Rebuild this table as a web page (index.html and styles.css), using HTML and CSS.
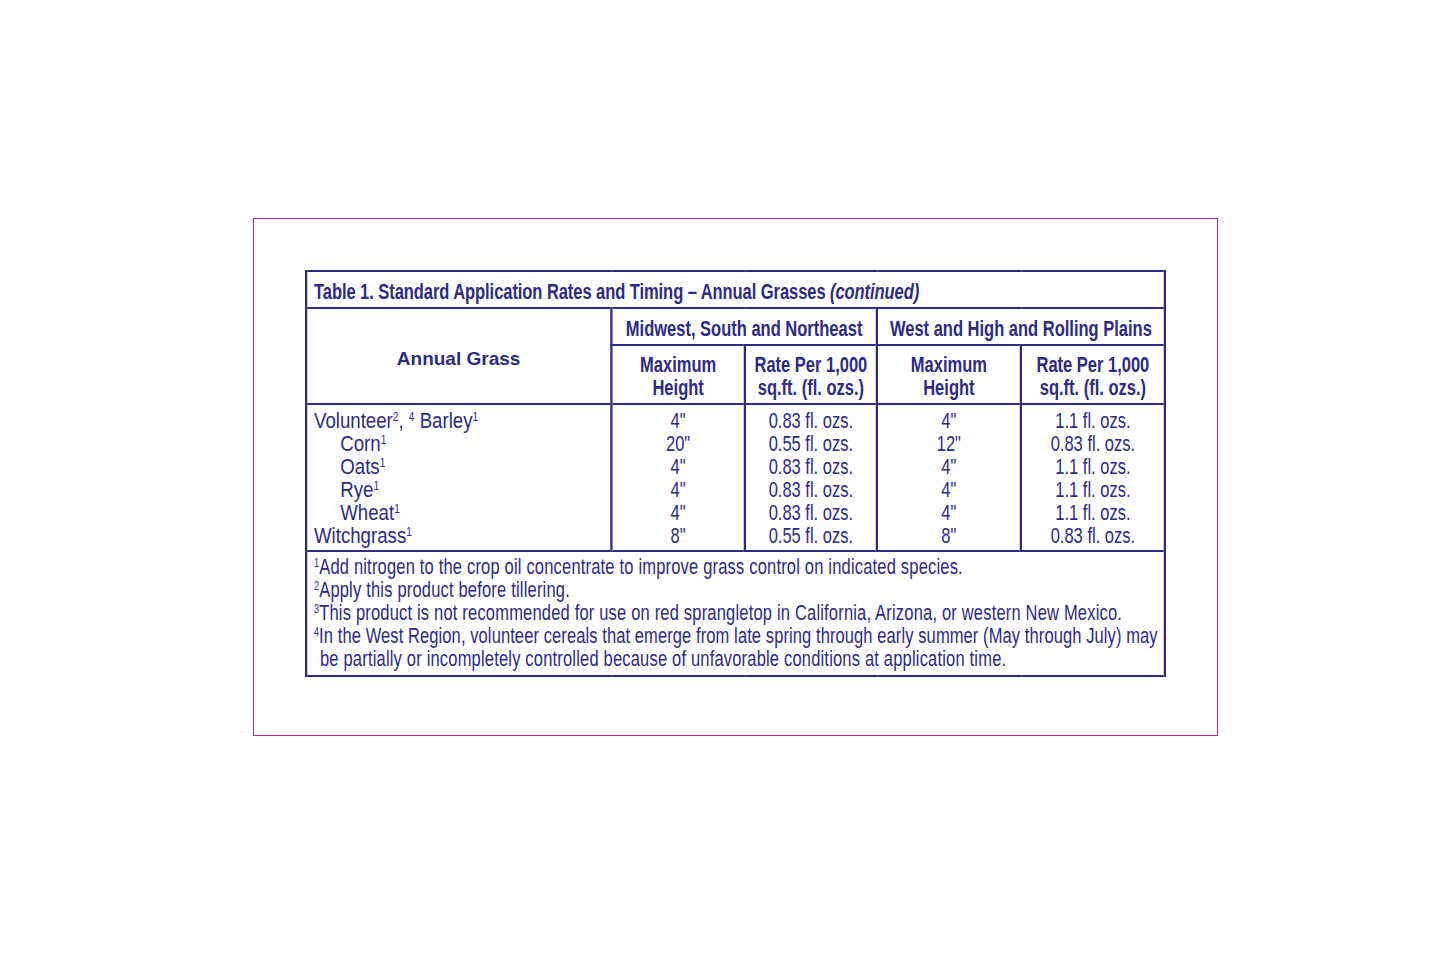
FILE: index.html
```html
<!DOCTYPE html>
<html>
<head>
<meta charset="utf-8">
<link rel="stylesheet" href="styles.css">
</head>
<body>
<div class="frame">
  <table class="rates">
    <colgroup>
      <col class="c1"><col class="c2"><col class="c3"><col class="c4"><col class="c5">
    </colgroup>
    <tr>
      <td colspan="5" class="title">Table 1. Standard Application Rates and Timing – Annual Grasses <i>(continued)</i></td>
    </tr>
    <tr>
      <th rowspan="2" class="grass-head"><span class="wide">Annual Grass</span></th>
      <th colspan="2" class="region">Midwest, South and Northeast</th>
      <th colspan="2" class="region">West and High and Rolling Plains</th>
    </tr>
    <tr>
      <th class="sub">Maximum<br>Height</th>
      <th class="sub">Rate Per 1,000<br>sq.ft. (fl. ozs.)</th>
      <th class="sub">Maximum<br>Height</th>
      <th class="sub">Rate Per 1,000<br>sq.ft. (fl. ozs.)</th>
    </tr>
    <tr class="data-row">
      <td class="names">
        <div class="names-inner">
          <div>Volunteer<sup>2</sup>, <sup>4</sup> Barley<sup>1</sup></div>
          <div class="ind">Corn<sup>1</sup></div>
          <div class="ind">Oats<sup>1</sup></div>
          <div class="ind">Rye<sup>1</sup></div>
          <div class="ind">Wheat<sup>1</sup></div>
          <div>Witchgrass<sup>1</sup></div>
        </div>
      </td>
      <td class="num"><div>4"</div><div>20"</div><div>4"</div><div>4"</div><div>4"</div><div>8"</div></td>
      <td class="num"><div>0.83 fl. ozs.</div><div>0.55 fl. ozs.</div><div>0.83 fl. ozs.</div><div>0.83 fl. ozs.</div><div>0.83 fl. ozs.</div><div>0.55 fl. ozs.</div></td>
      <td class="num"><div>4"</div><div>12"</div><div>4"</div><div>4"</div><div>4"</div><div>8"</div></td>
      <td class="num"><div>1.1 fl. ozs.</div><div>0.83 fl. ozs.</div><div>1.1 fl. ozs.</div><div>1.1 fl. ozs.</div><div>1.1 fl. ozs.</div><div>0.83 fl. ozs.</div></td>
    </tr>
    <tr>
      <td colspan="5" class="notes">
        <p><sup>1</sup>Add nitrogen to the crop oil concentrate to improve grass control on indicated species.</p>
        <p><sup>2</sup>Apply this product before tillering.</p>
        <p><sup>3</sup>This product is not recommended for use on red sprangletop in California, Arizona, or western New Mexico.</p>
        <p class="tight"><sup>4</sup>In the West Region, volunteer cereals that emerge from late spring through early summer (May through July) may<br><span class="hang">be partially or incompletely controlled because of unfavorable conditions at application time.</span></p>
      </td>
    </tr>
  </table>
</div>
</body>
</html>
```

FILE: styles.css
```css
html, body {
  margin: 0;
  padding: 0;
  background: #ffffff;
}

body {
  padding: 218px 0 0 253px;
  font-family: "Liberation Sans", Arial, sans-serif;
  color: #2e2a86;
}

.frame {
  box-sizing: border-box;
  width: 965px;
  height: 518px;
  border: 1px solid #b5268f;
  padding: 51px 0 0 51px;
}

.rates {
  border-collapse: collapse;
  table-layout: fixed;
  width: 1145px;
  color: #2e2a86;
  transform: scaleX(0.75);
  transform-origin: 0 0;
  font-size: 22px;
  line-height: 23px;
}

.c1 { width: 407px; }
.c2 { width: 178px; }
.c3 { width: 176px; }
.c4 { width: 192px; }
.c5 { width: 192px; }

.rates td, .rates th {
  border-style: solid;
  border-color: #2e2a86;
  border-width: 2px 3px;
  padding: 0;
}

.title {
  padding: 8px 0 4px 9px !important;
  font-weight: bold;
  text-align: left;
  white-space: nowrap;
  letter-spacing: -0.08px;
}

.title i {
  font-style: italic;
}

.grass-head {
  text-align: center;
  vertical-align: middle;
  padding-top: 4px !important;
}

.wide {
  display: inline-block;
  font-size: 19px;
  font-weight: bold;
  transform: scaleX(1.3333);
  white-space: nowrap;
}

.region {
  padding: 8px 0 4px 0 !important;
  font-weight: bold;
  text-align: center;
  white-space: nowrap;
}

.sub {
  padding: 7px 0 4px 0 !important;
  font-weight: bold;
  text-align: center;
  white-space: nowrap;
}

.data-row td {
  padding: 4px 0 3px 0;
  vertical-align: top;
  white-space: nowrap;
}

.rates .names {
  padding-left: 9px;
}

.names-inner {
  transform: scaleX(1.13);
  transform-origin: 0 0;
}

.names .ind {
  padding-left: 31px;
}

.num {
  text-align: center;
}

sup {
  font-size: 12px;
  line-height: 0;
  vertical-align: 7px;
}

.notes {
  padding: 3px 0 5px 9px !important;
  letter-spacing: 0.25px;
  white-space: nowrap;
}

.notes p {
  margin: 0;
}

.notes .tight {
  letter-spacing: 0.13px;
}

.hang {
  padding-left: 8px;
  letter-spacing: 0.25px;
}
```
